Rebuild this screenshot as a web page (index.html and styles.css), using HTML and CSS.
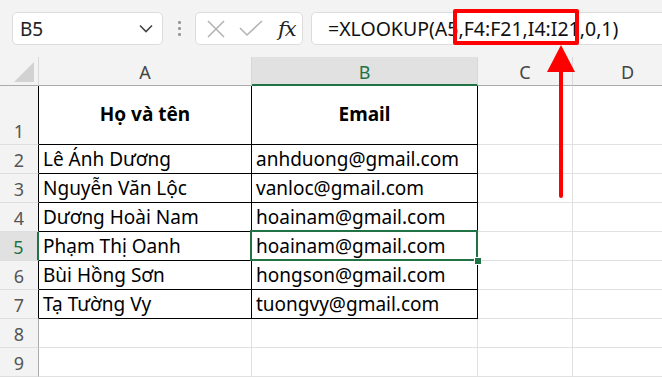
FILE: index.html
```html
<!DOCTYPE html>
<html>
<head>
    <title>XLOOKUP</title>
    <link rel="stylesheet" href="styles.css">
</head>
<body>
    <div class="app">
        <div class="formula-bar">
            <div class="name-box">
                <span>B5</span>
                <svg width="14" height="9" viewBox="0 0 14 9"><path d="M1 1.5 L7 7.5 L13 1.5" fill="none" stroke="#444" stroke-width="1.6"/></svg>
            </div>
            <div class="grip"><i></i><i></i><i></i></div>
            <div class="fx-box">
                <svg width="20" height="20" viewBox="0 0 20 20"><path d="M2 2 L18 18 M18 2 L2 18" stroke="#b4b4b4" stroke-width="1.6"/></svg>
                <svg width="24" height="17" viewBox="0 0 24 17"><path d="M1 8 L8 15 L23 1" fill="none" stroke="#b4b4b4" stroke-width="1.6"/></svg>
                <span class="fx">fx</span>
            </div>
            <div class="formula">=XLOOKUP(A5,F4:F21,I4:I21,0,1)</div>
        </div>

        <div class="sheet">
            <div class="corner"><span></span></div>
            <div class="ch">A</div>
            <div class="ch active">B</div>
            <div class="ch">C</div>
            <div class="ch">D</div>

            <div class="rh tb">1</div>
            <div class="cell tb head">Họ và tên</div>
            <div class="cell tb head">Email</div>
            <div class="cell"></div>
            <div class="cell"></div>

            <div class="rh tb">2</div>
            <div class="cell tb">Lê Ánh Dương</div>
            <div class="cell tb">anhduong@gmail.com</div>
            <div class="cell"></div>
            <div class="cell"></div>

            <div class="rh tb">3</div>
            <div class="cell tb">Nguyễn Văn Lộc</div>
            <div class="cell tb">vanloc@gmail.com</div>
            <div class="cell"></div>
            <div class="cell"></div>

            <div class="rh tb">4</div>
            <div class="cell tb">Dương Hoài Nam</div>
            <div class="cell tb">hoainam@gmail.com</div>
            <div class="cell"></div>
            <div class="cell"></div>

            <div class="rh active">5</div>
            <div class="cell tb">Phạm Thị Oanh</div>
            <div class="cell tb selected">hoainam@gmail.com</div>
            <div class="cell"></div>
            <div class="cell"></div>

            <div class="rh tb">6</div>
            <div class="cell tb">Bùi Hồng Sơn</div>
            <div class="cell tb">hongson@gmail.com</div>
            <div class="cell"></div>
            <div class="cell"></div>

            <div class="rh tb">7</div>
            <div class="cell tb">Tạ Tường Vy</div>
            <div class="cell tb">tuongvy@gmail.com</div>
            <div class="cell"></div>
            <div class="cell"></div>

            <div class="rh">8</div>
            <div class="cell"></div>
            <div class="cell"></div>
            <div class="cell"></div>
            <div class="cell"></div>

            <div class="rh">9</div>
            <div class="cell"></div>
            <div class="cell"></div>
            <div class="cell"></div>
            <div class="cell"></div>
        </div>

        <!-- annotation over the formula -->
        <div class="mark-box"></div>
        <svg class="mark-arrow" width="30" height="156" viewBox="0 0 30 156">
            <polygon points="15,0 1,27 29,27" fill="#ff0000"/>
            <line x1="15" y1="24" x2="15" y2="151" stroke="#ff0000" stroke-width="4" stroke-linecap="round"/>
        </svg>
    </div>
</body>
</html>
```

FILE: styles.css
```css
body {
    margin: 0;
    background-color: #fff;
    font-family: "Noto Sans", "Open Sans", sans-serif;
    overflow: hidden;
}
.app {
    position: relative;
    width: 662px;
    height: 377px;
    overflow: hidden;
}
.formula-bar {
    display: flex;
    align-items: center;
    height: 57px;
    padding: 0 0 0 12px;
    background-color: #f3f3f3;
    box-sizing: border-box;
}
.name-box {
    display: flex;
    align-items: center;
    justify-content: space-between;
    width: 151px;
    height: 33px;
    padding: 0 9px 0 7px;
    background-color: #fff;
    border: 1px solid #dcdcdc;
    border-radius: 5px;
    box-sizing: border-box;
    font-size: 19px;
    color: #222;
}
.grip {
    display: flex;
    flex-direction: column;
    align-items: center;
    gap: 3px;
    width: 32px;
}
.grip i {
    width: 3px;
    height: 3px;
    background-color: #9a9a9a;
    border-radius: 1px;
}
.fx-box {
    display: flex;
    align-items: center;
    width: 108px;
    height: 33px;
    padding: 0 0 0 10px;
    gap: 13px;
    background-color: #fff;
    border: 1px solid #dcdcdc;
    border-radius: 5px;
    box-sizing: border-box;
}
.fx {
    font-family: "DejaVu Serif", "Liberation Serif", serif;
    font-style: italic;
    font-size: 21px;
    color: #222;
    margin-left: 2px;
    letter-spacing: -1px;
}
.formula {
    flex: 1;
    height: 33px;
    margin: 0 -10px 0 8px;
    padding: 0 0 0 16px;
    line-height: 31px;
    background-color: #fff;
    border: 1px solid #dcdcdc;
    border-radius: 5px;
    box-sizing: border-box;
    font-size: 19.5px;
    color: #111;
    white-space: nowrap;
}
.sheet {
    display: grid;
    grid-template-columns: 39px 213px 226px 95px 110px;
    grid-template-rows: 29px 59px repeat(8, 29px);
}
.corner {
    position: relative;
    background-color: #f3f3f3;
    border-bottom: 1px solid #ababab;
    border-right: 1px solid #d8d8d8;
    box-sizing: border-box;
}
.corner span {
    position: absolute;
    right: 4px;
    bottom: 3px;
    width: 0;
    height: 0;
    border-left: 20px solid transparent;
    border-bottom: 20px solid #d2d2d2;
}
.ch {
    display: flex;
    align-items: center;
    justify-content: center;
    padding-top: 2px;
    background-color: #f3f3f3;
    border-right: 1px solid #d8d8d8;
    border-bottom: 1px solid #ababab;
    box-sizing: border-box;
    font-size: 18px;
    color: #444;
}
.ch.active {
    background-color: #e1e1e1;
    color: #217346;
    border-bottom: 2px solid #217346;
}
.rh {
    display: flex;
    align-items: flex-end;
    justify-content: center;
    padding-bottom: 0;
    background-color: #f3f3f3;
    border-right: 1px solid #ababab;
    border-bottom: 1px solid #dedede;
    box-sizing: border-box;
    font-size: 18px;
    line-height: 26px;
    color: #555;
}
.rh.tb {
    border-right-color: #000;
}
.rh.active {
    background-color: #e1e1e1;
    color: #217346;
    border-right: 2px solid #217346;
}
.cell {
    display: flex;
    align-items: flex-end;
    padding: 0 0 0 4px;
    border-right: 1px solid #e1e1e1;
    border-bottom: 1px solid #e1e1e1;
    box-sizing: border-box;
    font-size: 19px;
    line-height: 27px;
    color: #000;
    white-space: nowrap;
}
.cell.tb {
    border-right-color: #000;
    border-bottom-color: #000;
}
.cell.head {
    align-items: center;
    justify-content: center;
    padding: 0 0 2px 0;
    font-weight: bold;
}
.cell.selected {
    position: relative;
}
.cell.selected::before {
    content: "";
    position: absolute;
    top: -2px;
    left: -2px;
    right: -1px;
    bottom: -1px;
    border: 2px solid #217346;
}
.cell.selected::after {
    content: "";
    position: absolute;
    right: -5px;
    bottom: -5px;
    width: 6px;
    height: 6px;
    background-color: #217346;
    border: 1px solid #fff;
}
.mark-box {
    position: absolute;
    left: 453px;
    top: 9px;
    width: 126px;
    height: 36px;
    border: 4px solid #ff0000;
    border-radius: 2px;
    box-sizing: border-box;
}
.mark-arrow {
    position: absolute;
    left: 546px;
    top: 45px;
}
```
